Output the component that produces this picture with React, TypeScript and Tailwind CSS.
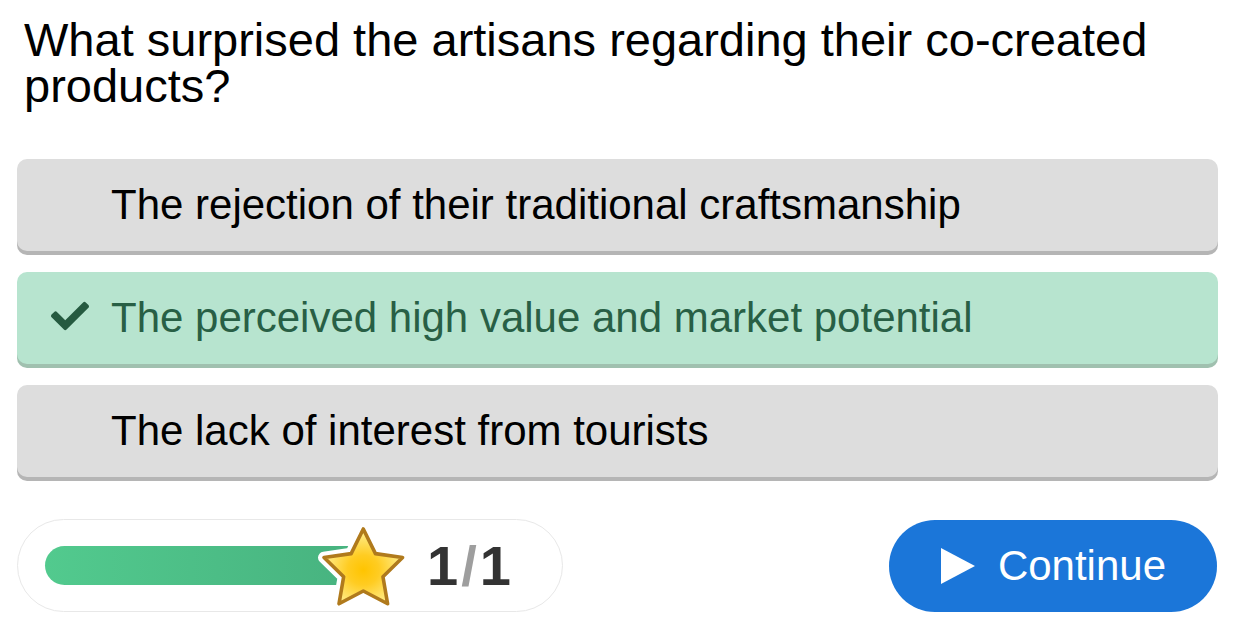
import { FaCheck } from "react-icons/fa";

type Option = { text: string; correct?: boolean };

const options: Option[] = [
  { text: "The rejection of their traditional craftsmanship" },
  { text: "The perceived high value and market potential", correct: true },
  { text: "The lack of interest from tourists" },
];

function Star() {
  const pts =
    "46.3,7 58.44,31.6 85.6,35.57 65.95,54.7 70.6,81.75 46.3,69 22,81.75 26.65,54.7 7,35.57 34.16,31.6";
  return (
    <svg width="93" height="89" viewBox="0 0 93 89" className="block">
      <defs>
        <radialGradient id="starFill" cx="50%" cy="55%" r="50%">
          <stop offset="0%" stopColor="#ffc400" />
          <stop offset="40%" stopColor="#ffcc22" />
          <stop offset="100%" stopColor="#ffec88" />
        </radialGradient>
      </defs>
      <polygon points={pts} fill="#fff" stroke="#fff" strokeWidth="12" strokeLinejoin="round" />
      <polygon points={pts} fill="url(#starFill)" stroke="#b07a1c" strokeWidth="3.6" strokeLinejoin="round" />
    </svg>
  );
}

function Progress() {
  return (
    <div className="flex h-[93px] w-[546px] items-center rounded-full border border-[#e8e8e8] bg-white pl-[27px]">
      <div className="relative h-[39px] w-[320px]">
        <div className="h-full w-full rounded-l-full bg-gradient-to-r from-[#52ca8e] to-[#47b27f]" />
        <div className="absolute left-[272px] top-[-24px]">
          <Star />
        </div>
      </div>
      <div className="ml-[62px] text-[56px] font-bold leading-none text-[#333]">
        1<span className="mx-[3px] text-[#9e9e9e]">/</span>1
      </div>
    </div>
  );
}

export default function App() {
  return (
    <div
      className="min-h-screen bg-white pl-[17px] pr-[21px] pt-[17px] text-black"
      style={{ fontFamily: '"Liberation Sans", Arial, sans-serif' }}
    >
      <h1 className="pl-[7px] text-[47px] font-normal leading-[46px]">
        What surprised the artisans regarding their co-created products?
      </h1>

      <div className="mt-[50px] flex flex-col gap-[21px]">
        {options.map((o) => (
          <div
            key={o.text}
            className={
              o.correct
                ? "flex h-[92px] items-center rounded-[10px] bg-[#b7e4cf] text-[#285f45] shadow-[0_4px_0_#a0c0af]"
                : "flex h-[92px] items-center rounded-[10px] bg-[#dddddd] text-black shadow-[0_4px_0_#b5b5b5]"
            }
          >
            <div className="flex w-[95px] shrink-0 pl-[34px]">
              {o.correct && <FaCheck size={38} className="-mt-[4px] text-[#255a40]" />}
            </div>
            <span className="-ml-[1px] text-[42px] leading-none">{o.text}</span>
          </div>
        ))}
      </div>

      <div className="mt-[42px] flex items-center justify-between">
        <Progress />
        <button className="mr-[1px] flex h-[92px] items-center rounded-full bg-[#1b76d9] pl-[52px] pr-[51px] text-white">
          <svg width="34" height="36" viewBox="0 0 34 36" className="block">
            <polygon points="0,0 34,18 0,36" fill="#fff" />
          </svg>
          <span className="ml-[23px] text-[42px] leading-none">Continue</span>
        </button>
      </div>
    </div>
  );
}
